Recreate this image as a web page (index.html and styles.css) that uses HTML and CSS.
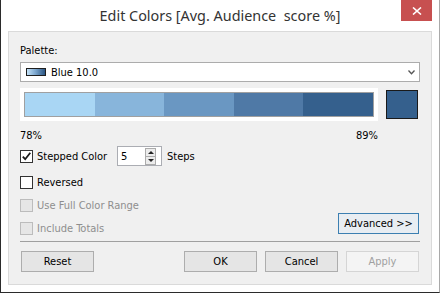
FILE: index.html
```html
<!DOCTYPE html>
<html>
<head>
  <title>Edit Colors</title>
  <meta charset="utf-8">
  <link rel="stylesheet" href="styles.css">
</head>
<body>
<div class="window">
  <div class="titlebar">
    <span class="title">Edit Colors [Avg. Audience&nbsp; score %]</span>
    <div class="close">
      <svg width="10" height="8" viewBox="0 0 10 8"><path d="M1 0.5 L9 7.5 M9 0.5 L1 7.5" stroke="#fff" stroke-width="1.6"/></svg>
    </div>
  </div>

  <div class="panel">
    <div class="label">Palette:</div>
    <div class="dropdown">
      <span class="palette-icon"></span>
      <span class="palette-name">Blue 10.0</span>
      <svg class="chevron" width="7" height="5" viewBox="0 0 7 5"><path d="M0.5 0.5 L3.5 3.8 L6.5 0.5" fill="none" stroke="#555" stroke-width="1.3"/></svg>
    </div>

    <div class="color-row">
      <div class="ramp-box">
        <div class="ramp">
          <span class="step s1"></span>
          <span class="step s2"></span>
          <span class="step s3"></span>
          <span class="step s4"></span>
          <span class="step s5"></span>
        </div>
      </div>
      <div class="swatch"></div>
    </div>
    <div class="range">
      <span>78%</span>
      <span>89%</span>
    </div>

    <div class="check-row stepped">
      <span class="box checked">
        <svg width="11" height="11" viewBox="0 0 11 11"><path d="M1.8 5.6 L4.2 8.2 L9.3 1.8" fill="none" stroke="#1a1a1a" stroke-width="1.8"/></svg>
      </span>
      <span class="check-text">Stepped Color</span>
      <div class="spinner">
        <span class="spin-value">5</span>
        <div class="spin">
          <span class="spin-up"></span>
          <span class="spin-down"></span>
        </div>
      </div>
      <span class="steps">Steps</span>
    </div>

    <div class="options">
      <div class="option-list">
        <div class="check-row">
          <span class="box"></span>
          <span class="check-text">Reversed</span>
        </div>
        <div class="check-row disabled">
          <span class="box"></span>
          <span class="check-text">Use Full Color Range</span>
        </div>
        <div class="check-row disabled">
          <span class="box"></span>
          <span class="check-text">Include Totals</span>
        </div>
      </div>
      <button class="btn advanced">Advanced &gt;&gt;</button>
    </div>

    <div class="separator"></div>

    <div class="footer">
      <button class="btn">Reset</button>
      <div class="footer-right">
        <button class="btn">OK</button>
        <button class="btn">Cancel</button>
        <button class="btn" disabled>Apply</button>
      </div>
    </div>
  </div>
</div>
</body>
</html>
```

FILE: styles.css
```css
body {
  margin: 0;
  background: #fff;
  font-family: "DejaVu Sans Condensed", "DejaVu Sans", sans-serif;
  font-stretch: condensed;
  font-size: 11px;
  color: #000;
}

.window {
  position: relative;
  width: 440px;
  height: 293px;
  box-sizing: border-box;
  background: #fff;
  border-left: 1px solid #2b2b2b;
  border-right: 1px solid #a9a9a9;
  border-bottom: 1px solid #2b2b2b;
}

.titlebar {
  height: 31px;
  display: flex;
  align-items: center;
  justify-content: center;
}

.title {
  font-family: "Noto Sans", "Open Sans", sans-serif;
  font-stretch: normal;
  font-size: 14.4px;
  color: #333;
}

.close {
  position: absolute;
  top: 0;
  right: 7px;
  width: 31px;
  height: 21px;
  background: #c75050;
  display: flex;
  align-items: center;
  justify-content: center;
}

.panel {
  margin: 0 7px;
  height: 254px;
  box-sizing: border-box;
  border: 1px solid #dadada;
  background: #f0f0f0;
  padding: 12px 11px 0;
}

.label {
  line-height: 13px;
  margin-bottom: 5px;
}

/* palette dropdown */
.dropdown {
  height: 20px;
  box-sizing: border-box;
  border: 1px solid #acacac;
  background: #fff;
  display: flex;
  align-items: center;
  padding-left: 5px;
  margin-bottom: 6px;
}

.palette-icon {
  width: 20px;
  height: 8px;
  box-sizing: border-box;
  border: 1px solid #1e1e1e;
  background: linear-gradient(to right, #c4e2f7, #7fa9d0 45%, #2b5683);
}

.palette-name {
  margin-left: 5px;
}

.chevron {
  margin-left: auto;
  margin-right: 4px;
}

/* color ramp */
.color-row {
  display: flex;
  align-items: flex-start;
}

.ramp-box {
  width: 358px;
  height: 33px;
  box-sizing: border-box;
  background: #fff;
  padding: 4px;
}

.ramp {
  height: 25px;
  box-sizing: border-box;
  border: 1px solid #a0a0a0;
  display: flex;
}

.step {
  flex: 1;
}

.s1 { background: #a9d6f4; }
.s2 { background: #88b5db; }
.s3 { background: #6a97c2; }
.s4 { background: #4f79a6; }
.s5 { background: #35608d; }

.swatch {
  width: 32px;
  height: 29px;
  box-sizing: border-box;
  margin: 2px 0 0 8px;
  border: 1px solid #1a1a1a;
  background: #35608d;
}

.range {
  width: 358px;
  display: flex;
  justify-content: space-between;
  line-height: 13px;
  margin-top: 8px;
}

/* checkboxes */
.check-row {
  display: flex;
  align-items: center;
  height: 13px;
  line-height: 13px;
  margin-top: 10px;
}

.check-row.stepped {
  height: 20px;
  margin-top: 4px;
}

.box {
  width: 13px;
  height: 13px;
  box-sizing: border-box;
  border: 1px solid #333;
  background: #fff;
  display: flex;
  align-items: center;
  justify-content: center;
}

.check-text {
  margin-left: 4px;
}

.stepped .check-text {
  width: 80px;
}

.disabled .box {
  border-color: #bcbcbc;
  background: #e6e6e6;
}

.disabled .check-text {
  color: #8e8e8e;
}

.spinner {
  width: 45px;
  height: 20px;
  box-sizing: border-box;
  border: 1px solid #abadb3;
  background: #fff;
  display: flex;
  align-items: center;
  padding-left: 3px;
}

.spin-value {
  flex: 1;
}

.spin {
  width: 11px;
  height: 17px;
  box-sizing: border-box;
  border: 1px solid #acacac;
  background: #ececec;
  margin-right: 5px;
  display: flex;
  flex-direction: column;
}

.spin-up,
.spin-down {
  flex: 1;
  display: flex;
  align-items: center;
  justify-content: center;
}

.spin-up {
  border-bottom: 1px solid #acacac;
}

.spin-up::after {
  content: "";
  border-left: 3px solid transparent;
  border-right: 3px solid transparent;
  border-bottom: 3px solid #222;
}

.spin-down::after {
  content: "";
  border-left: 3px solid transparent;
  border-right: 3px solid transparent;
  border-top: 3px solid #222;
}

.steps {
  margin-left: 5px;
}

.options {
  display: flex;
  justify-content: space-between;
  align-items: flex-end;
}

/* buttons */
.btn {
  width: 73px;
  height: 21px;
  box-sizing: border-box;
  border: 1px solid #adadad;
  background: #e5e5e5;
  font-family: inherit;
  font-stretch: condensed;
  font-size: 11px;
  color: #000;
  padding: 0;
}

.btn:disabled {
  border-color: #d5d5d5;
  background: #f4f4f4;
  color: #a0a0a0;
}

.btn.advanced {
  width: 81px;
  margin: 0 1px 1px 0;
  border-color: #3c7fb1;
  background: #e8edf2;
}

.separator {
  height: 1px;
  background: #a0a0a0;
  margin-top: 6px;
}

.footer {
  display: flex;
  justify-content: space-between;
  padding: 0 1px;
  margin-top: 9px;
}

.footer-right {
  display: flex;
  gap: 8px;
}
```
